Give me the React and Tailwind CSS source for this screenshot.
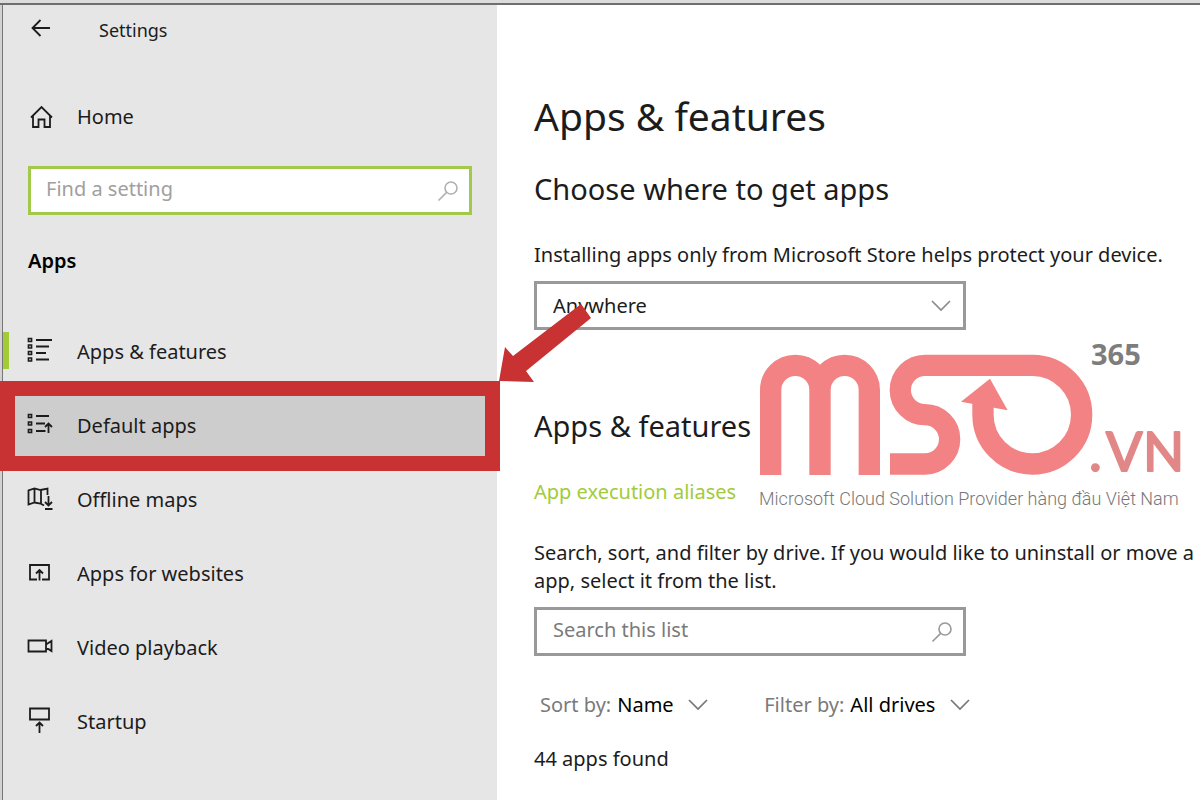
import React from "react";

const ink = { fill: "none", stroke: "currentColor", strokeWidth: 1.8 };

function BackIcon() {
  return (
    <svg width="20" height="18" viewBox="0 0 20 18" aria-hidden="true" {...ink}>
      <path d="M19 9H1.5M9.5 1 1.5 9l8 8" />
    </svg>
  );
}

function HomeIcon() {
  return (
    <svg width="24" height="24" viewBox="0 0 24 24" aria-hidden="true" {...ink}>
      <path d="M2 12.500 12.500 2 23 12.500M4 11v11h5.500v-7.500h6V22H21V11" />
    </svg>
  );
}

function SearchIcon() {
  return (
    <svg width="22" height="22" viewBox="0 0 22 22" aria-hidden="true" fill="none" stroke="currentColor" strokeWidth="1.6">
      <circle cx="14" cy="8" r="6" />
      <path d="M9.600 12.400 1.500 20.500" />
    </svg>
  );
}

function ChevronIcon() {
  return (
    <svg width="20" height="12" viewBox="0 0 20 12" aria-hidden="true" fill="none" stroke="currentColor" strokeWidth="1.7">
      <path d="m1 1 9 9 9-9" />
    </svg>
  );
}

function ListIcon() {
  return (
    <svg width="26" height="26" viewBox="0 0 26 26" aria-hidden="true" {...ink}>
      <path d="M1.500 1.500h3v3h-3zM1.500 8h3v3h-3zM1.500 14.500h3v3h-3zM1.500 21h3v3h-3z" strokeWidth="1.7" />
      <path d="M9 3h16M9 9.500h13M9 16h10M9 22.500h13" />
    </svg>
  );
}

function DefaultIcon() {
  return (
    <svg width="26" height="26" viewBox="0 0 26 26" aria-hidden="true" {...ink}>
      <path d="M1.500 3.500h3v3h-3zM1.500 11h3v3h-3zM1.500 18.500h3v3h-3z" strokeWidth="1.7" />
      <path d="M9 5h13M9 12.500h9M9 20h9.500M21.500 22v-9.500M18 16l3.500-3.500 3.500 3.500" />
    </svg>
  );
}

function MapIcon() {
  return (
    <svg width="26" height="26" viewBox="0 0 26 26" aria-hidden="true" {...ink}>
      <path d="M17 20.500 13.500 18.500 7.500 17.500l-6 2V5.500l6-2 6 1.500 7-1.500V10M7.500 3.500V18M14 5v14" />
      <path d="M21.500 11v9.500M18 17l3.500 3.500L25 17M18 24h7.500" />
    </svg>
  );
}

function WebIcon() {
  return (
    <svg width="26" height="26" viewBox="0 0 26 26" aria-hidden="true" {...ink}>
      <path d="M10 20.500H3V6h19v14.500h-7M12.500 21.500V11M9 14.500l3.500-3.500 3.500 3.500" />
    </svg>
  );
}

function VideoIcon() {
  return (
    <svg width="26" height="26" viewBox="0 0 26 26" aria-hidden="true" {...ink}>
      <path d="M1.500 7.500H19v11H1.500zM19 11.500 24.500 8v10L19 14.500" />
    </svg>
  );
}

function StartupIcon() {
  return (
    <svg width="26" height="26" viewBox="0 0 26 26" aria-hidden="true" {...ink}>
      <path d="M3 1.500h19v11H3zM12.500 26V15.500M9 19l3.500-3.500L16 19" />
    </svg>
  );
}

const items = [
  { label: "Apps & features", Icon: ListIcon, current: true },
  { label: "Default apps", Icon: DefaultIcon, marked: true },
  { label: "Offline maps", Icon: MapIcon },
  { label: "Apps for websites", Icon: WebIcon },
  { label: "Video playback", Icon: VideoIcon },
  { label: "Startup", Icon: StartupIcon },
];

function PointerArrow() {
  return (
    <svg className="absolute -top-3.5 left-full z-20 ml-0.5" width="94" height="82" viewBox="0 0 94 82" aria-hidden="true">
      <path d="M0 80 6 46l8 9L82 3l10 14L27 70l8 11z" fill="#c83232" />
    </svg>
  );
}

function NavItem({ label, Icon, current, marked }) {
  return (
    <li className="relative">
      {current && <span className="absolute top-[17px] left-0 h-[37px] w-[6px] bg-[#a2cb3a]" />}
      <button
        type="button"
        className={
          marked
            ? "flex h-[74px] w-full items-center gap-6 bg-[#cdcdcd] pl-6 text-left"
            : "flex h-[74px] w-full items-center gap-6 pl-6 text-left"
        }
      >
        <span className="mb-1 shrink-0"><Icon /></span>
        <span>{label}</span>
      </button>
      {marked && (
        <span className="pointer-events-none absolute -inset-y-2 -right-[3px] -left-[3px] z-10 border-[15px] border-[#c83232]" />
      )}
    </li>
  );
}

function Logo() {
  return (
    <svg
      className="absolute top-[315px] left-[260px]"
      width="430"
      height="195"
      viewBox="0 -20 430 195"
      role="img"
      aria-label="MSO365.VN"
    >
      <g transform="translate(-17 -10) scale(.3333)">
        <g fill="none" stroke="#f28283" strokeWidth="64">
          <path d="M92 435V180a74 74 0 0 1 148 0V435M240 180a74 74 0 0 1 148 0V435" />
          <path d="M450 402H555a74 74 0 0 0 0-148a74 74 0 0 1 0-148H878a148 148 0 1 1-149 148V215" />
        </g>
        <path d="M750 146 803 241 663 215z" fill="#f28283" />
      </g>
      <text x="334" y="25" fontFamily="Open Sans" fontWeight="700" fontSize="29" fill="#7d7d7d">365</text>
      <text
        x="332"
        y="131"
        fontFamily="Lato"
        fontSize="54"
        fill="#e28787"
        stroke="#e28787"
        strokeWidth="2"
        strokeLinejoin="round"
      >
        .<tspan x="349">V</tspan><tspan x="386">N</tspan>
      </text>
      <text x="2" y="165" fontFamily="Roboto" fontWeight="300" fontSize="18" fill="#777777">
        Microsoft Cloud Solution Provider hàng đầu Việt Nam
      </text>
    </svg>
  );
}

function InlineSelect({ id, label, value }) {
  return (
    <div className="flex items-center">
      <label htmlFor={id} className="mr-1.5 text-[#7a7a7a]">{label}</label>
      <select id={id} className="appearance-none bg-transparent text-black">
        <option>{value}</option>
      </select>
      <span className="ml-3.5 text-[#777777]"><ChevronIcon /></span>
    </div>
  );
}

export default function App() {
  return (
    <div className="flex min-h-screen flex-col bg-[#dcdcdc] font-['Noto_Sans',sans-serif] text-[20px] leading-7 text-[#1c1c1c]">
      <div className="h-[5px] border-b-2 border-[#6e6e6e] bg-[#dcdcdc]" />
      <div className="flex flex-1 border-l-2 border-[#d2d2d2]">
        <aside className="w-[495px] shrink-0 border-l border-[#777777] bg-[#e6e6e6]">
          <header className="flex h-[50px] items-center gap-12 pl-7">
            <button type="button" aria-label="Back" className="mb-1"><BackIcon /></button>
            <span className="text-[18px]">Settings</span>
          </header>
          <a href="#home" className="mt-12 flex h-7 items-center gap-6 pl-[26px]">
            <HomeIcon />
            <span>Home</span>
          </a>
          <div className="mx-[25px] mt-[35px] flex h-[49px] items-center border-[3px] border-[#a2c94a] bg-white pr-2.5 pl-[15px] text-[#b0b0b0]">
            <input
              type="text"
              aria-label="Find a setting"
              placeholder="Find a setting"
              className="h-full min-w-0 flex-1 bg-transparent pb-1 text-black outline-none placeholder:text-[#a0a0a0]"
            />
            <SearchIcon />
          </div>
          <h2 className="mt-8 pl-[25px] font-semibold text-black">Apps</h2>
          <nav className="mt-10" aria-label="Apps">
            <ul className="relative">
              {items.map((item) => (
                <NavItem key={item.label} {...item} />
              ))}
              <li className="absolute top-0 left-full" aria-hidden="true">
                <span className="relative block h-0 w-0"><PointerArrow /></span>
              </li>
            </ul>
          </nav>
        </aside>
        <main className="relative min-w-0 flex-1 overflow-hidden bg-white pl-[37px]">
          <h1 className="mt-[83px] text-[39px] leading-[56px]">Apps &amp; features</h1>
          <section>
            <h2 className="mt-[25px] text-[29px] leading-10">Choose where to get apps</h2>
            <label htmlFor="source" className="mt-8 block whitespace-nowrap">
              Installing apps only from Microsoft Store helps protect your device.
            </label>
            <div className="mt-3 flex h-[49px] w-[432px] items-center border-[3px] border-[#999999] pr-3 pl-4">
              <select id="source" className="flex-1 appearance-none bg-transparent">
                <option>Anywhere</option>
              </select>
              <span className="pointer-events-none text-[#8c8c8c]"><ChevronIcon /></span>
            </div>
          </section>
          <section>
            <h2 className="mt-[76px] text-[29px] leading-10">Apps &amp; features</h2>
            <a href="#aliases" className="mt-8 block text-[#a2cb3a]">App execution aliases</a>
            <p className="mt-[33px] whitespace-nowrap">
              Search, sort, and filter by drive. If you would like to uninstall or move a
              <br />
              app, select it from the list.
            </p>
            <div className="mt-3 flex h-[49px] w-[432px] items-center border-[3px] border-[#999999] pr-2.5 pl-4 text-[#999999]">
              <input
                type="text"
                aria-label="Search this list"
                placeholder="Search this list"
                className="h-full min-w-0 flex-1 bg-transparent pb-1 text-black outline-none placeholder:text-[#7a7a7a]"
              />
              <SearchIcon />
            </div>
            <div className="mt-[35px] flex gap-14 pl-1.5">
              <InlineSelect id="sort" label="Sort by:" value="Name" />
              <InlineSelect id="filter" label="Filter by:" value="All drives" />
            </div>
            <p className="mt-[26px]">44 apps found</p>
          </section>
          <Logo />
        </main>
      </div>
    </div>
  );
}
